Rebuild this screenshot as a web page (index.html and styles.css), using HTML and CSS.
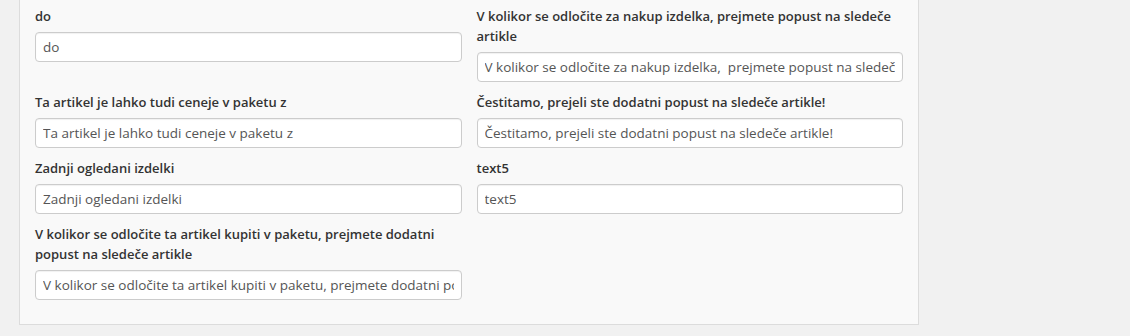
FILE: index.html
```html
<!DOCTYPE html>
<html lang="en">

<head>
    <meta charset="UTF-8">
    <meta name="viewport" content="width=device-width, initial-scale=1.0">
    <title>Prevodi</title>
    <link rel="stylesheet" href="styles.css">
</head>

<body>
    <!-- Translation fields panel -->
    <div class="panel">
        <div class="form-grid">
            <div class="form-group">
                <label for="f1">do</label>
                <input type="text" id="f1" value="do">
            </div>
            <div class="form-group">
                <label for="f2">V kolikor se odločite za nakup izdelka, prejmete popust na sledeče artikle</label>
                <input type="text" id="f2" value="V kolikor se odločite za nakup izdelka,  prejmete popust na sledeče artikle">
            </div>
            <div class="form-group">
                <label for="f3">Ta artikel je lahko tudi ceneje v paketu z</label>
                <input type="text" id="f3" value="Ta artikel je lahko tudi ceneje v paketu z">
            </div>
            <div class="form-group">
                <label for="f4">Čestitamo, prejeli ste dodatni popust na sledeče artikle!</label>
                <input type="text" id="f4" value="Čestitamo, prejeli ste dodatni popust na sledeče artikle!">
            </div>
            <div class="form-group">
                <label for="f5">Zadnji ogledani izdelki</label>
                <input type="text" id="f5" value="Zadnji ogledani izdelki">
            </div>
            <div class="form-group">
                <label for="f6">text5</label>
                <input type="text" id="f6" value="text5">
            </div>
            <div class="form-group">
                <label for="f7">V kolikor se odločite ta artikel kupiti v paketu, prejmete dodatni popust na sledeče artikle</label>
                <input type="text" id="f7" value="V kolikor se odločite ta artikel kupiti v paketu, prejmete dodatni popust na sledeče artikle">
            </div>
        </div>
    </div>
</body>

</html>
```

FILE: styles.css
```css
/* General Styling */
body {
    margin: 0;
    padding: 0;
    background-color: #f1f1f1;
    font-family: 'Open Sans', 'Lato', sans-serif;
    color: #333;
}

/* Panel holding the fields */
.panel {
    width: 868px;
    margin-left: 19px;
    padding: 6px 15px 14px;
    background-color: #f9f9f9;
    border: 1px solid #dcdcdc;
    border-top: none;
}

.form-grid {
    display: grid;
    grid-template-columns: 1fr 1fr;
    column-gap: 15px;
    align-items: start;
}

.form-group {
    display: flex;
    flex-direction: column;
    margin-bottom: 10px;
}

.form-group label {
    font-size: 13px;
    font-weight: 600;
    line-height: 20px;
    color: #333;
    margin-bottom: 6px;
}

.form-group input {
    height: 30px;
    box-sizing: border-box;
    padding: 0 7px;
    font-family: inherit;
    font-size: 13.5px;
    color: #555;
    background-color: #fff;
    border: 1px solid #ccc;
    border-radius: 4px;
    box-shadow: inset 0 1px 1px rgba(0, 0, 0, 0.06);
    outline: none;
}
```
